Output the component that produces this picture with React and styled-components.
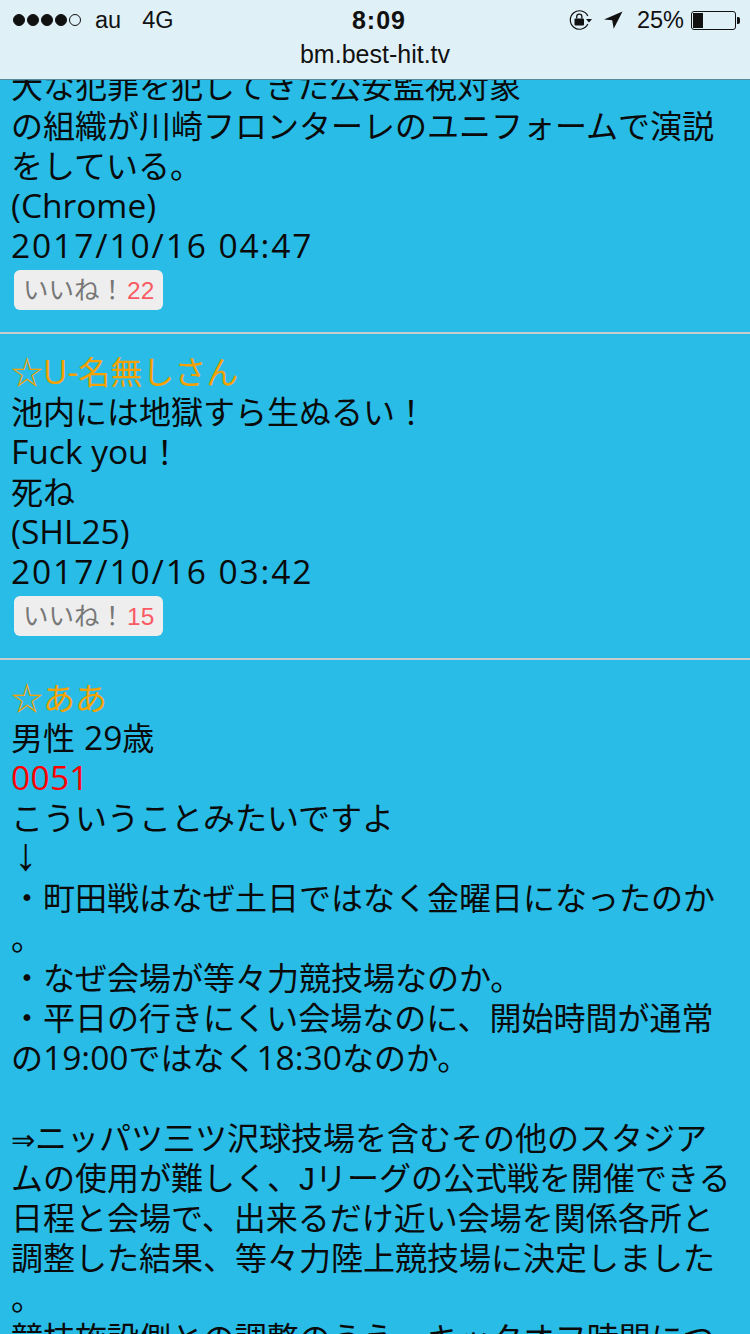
import React from "react";
import styled, { createGlobalStyle } from "styled-components";

const Global = createGlobalStyle`
  html, body { margin: 0; padding: 0; background: #28bce6; }
`;
const Page = styled.div`
  width: 750px; height: 1334px; overflow: hidden; background: #28bce6;
  font-family: "Liberation Sans", "Noto Sans CJK JP", sans-serif; color: #111;
`;
const Header = styled.header`
  position: relative; z-index: 2; height: 79px; background: #dff0f7; border-bottom: 1px solid #5b8a9c;
  display: flex; flex-direction: column;
`;
const StatusBar = styled.div`
  height: 40px; display: grid; grid-template-columns: 1fr auto 1fr; align-items: center; padding: 0 11px 0 13px;
  font-size: 23.5px; color: #111;
`;
const Left = styled.div`display: flex; align-items: center; gap: 14px;`;
const Dots = styled.div`display: flex; gap: 2px;`;
const Dot = styled.span`
  width: 12px; height: 12px; border-radius: 50%; box-sizing: border-box; border: 1px solid #111;
  background: ${p => (p.$on ? "#111" : "transparent")};
`;
const Network = styled.span`margin-left: 7px;`;
const Clock = styled.div`font-weight: 700; font-size: 25px; letter-spacing: 1px; margin-left: 6px;`;
const Right = styled.div`display: flex; align-items: center; justify-content: flex-end;`;
const Url = styled.div`text-align: center; font-size: 25px; line-height: 28px; color: #111;`;
const Feed = styled.main`
  margin-top: -13px; font-family: Inter, "Noto Sans CJK JP", sans-serif; font-size: 32px; line-height: 40px;
  white-space: nowrap; color: #0a0a0a;
`;
const Post = styled.article`
  padding: 0 0 22px 11px; border-bottom: 2px solid #c8ccce; margin-bottom: 19px;
  &:last-child { border: 0; }
`;
const Line = styled.div`height: 40px;`;
const Name = styled(Line)`color: #f5a100;`;
const Red = styled(Line)`color: #f00;`;
const Latin = styled.span`
  font-family: "Open Sans", sans-serif; font-size: 33.5px; font-weight: 400; line-height: 0;
  letter-spacing: ${p => p.$s || 0}px;
`;
const JLetter = styled.span`font-family: "Liberation Sans", sans-serif; line-height: 0;`;
const Star = styled.span`font-family: "Liberation Sans", "Noto Sans CJK JP", sans-serif; line-height: 0;`;
const DownArrow = styled.span`
  font-family: "Liberation Sans", sans-serif; font-size: 46px; line-height: 0; margin-left: 3px;
`;
const SmallArrow = styled.span`font-family: "Liberation Sans", sans-serif; font-size: 29px; line-height: 0;`;
const Like = styled.button`
  display: block; margin: 3px 0 0 3px; height: 40px; padding: 0 9px; border: 0; border-radius: 6px;
  background: #eee; color: #777; font-family: "Liberation Sans", "Noto Sans CJK JP", sans-serif; font-size: 25.5px; line-height: 40px;
`;
const Count = styled.span`color: #fa5a64; font-size: 24.5px; margin-left: 2px;`;

const BatteryBox = styled.div`
  width: 45px; height: 19px; border: 1px solid #111; border-radius: 3px; padding: 1px; box-sizing: border-box; display: flex;
  position: relative; margin-left: 7px; margin-right: 3px;
  &::after { content: ""; position: absolute; right: -5px; top: 5px; width: 3px; height: 7px; background: #111; border-radius: 0 2px 2px 0; }
`;
const BatteryFill = styled.div`width: 10px; background: #111;`;
const LockIcon = styled.svg`margin-right: 12px;`;
const ArrowIcon = styled.svg`margin-right: 14px;`;

const RotationLock = () => (
  <LockIcon width="23" height="20" viewBox="0 0 23 20" fill="none">
    <path d="M18.8 6A9.2 9.2 0 1 0 18.8 14" stroke="#111" strokeWidth="1.2" />
    <path d="M17 9h6l-3 3.5z" fill="#111" />
    <rect x="5.5" y="8.5" width="9.5" height="7" rx="1" fill="#111" />
    <path d="M7.7 8.5V6.8a2.6 2.6 0 0 1 5.2 0v1.7" stroke="#111" strokeWidth="1.3" />
  </LockIcon>
);
const Arrow = () => (
  <ArrowIcon width="19" height="18" viewBox="0 0 19 18"><path d="M18.5.5 0 8.5l8.2.8 1.5 8.5z" fill="#111" /></ArrowIcon>
);

const P = ({ children }) => <Line>{children}</Line>;

export default function App() {
  return (
    <Page>
      <Global />
      <Header>
        <StatusBar>
          <Left>
            <Dots>{[1, 1, 1, 1, 0].map((o, i) => <Dot key={i} $on={!!o} />)}</Dots>
            <span>au</span>
            <Network>4G</Network>
          </Left>
          <Clock>8:09</Clock>
          <Right>
            <RotationLock />
            <Arrow />
            <span>25%</span>
            <BatteryBox><BatteryFill /></BatteryBox>
          </Right>
        </StatusBar>
        <Url>bm.best-hit.tv</Url>
      </Header>
      <Feed>
        <Post>
          <P>大な犯罪を犯してきた公安監視対象</P>
          <P>の組織が川崎フロンターレのユニフォームで演説</P>
          <P>をしている。</P>
          <P><Latin>(Chrome)</Latin></P>
          <P><Latin $s={1.9}>2017/10/16 04:47</Latin></P>
          <Like>いいね！<Count>22</Count></Like>
        </Post>
        <Post>
          <Name><Star>☆</Star><Latin>U-</Latin>名無しさん</Name>
          <P>池内には地獄すら生ぬるい！</P>
          <P><Latin>Fuck you</Latin>！</P>
          <P>死ね</P>
          <P><Latin>(SHL25)</Latin></P>
          <P><Latin $s={1.9}>2017/10/16 03:42</Latin></P>
          <Like>いいね！<Count>15</Count></Like>
        </Post>
        <Post>
          <Name><Star>☆</Star>ああ</Name>
          <P>男性 <Latin>29</Latin>歳</P>
          <Red><Latin $s={0.3}>0051</Latin></Red>
          <P>こういうことみたいですよ</P>
          <P><DownArrow>↓</DownArrow></P>
          <P>・町田戦はなぜ土日ではなく金曜日になったのか</P>
          <P>。</P>
          <P>・なぜ会場が等々力競技場なのか。</P>
          <P>・平日の行きにくい会場なのに、開始時間が通常</P>
          <P>の<Latin>19:00</Latin>ではなく<Latin>18:30</Latin>なのか。</P>
          <P />
          <P><SmallArrow>⇒</SmallArrow>ニッパツ三ツ沢球技場を含むその他のスタジア</P>
          <P>ムの使用が難しく、<JLetter>J</JLetter>リーグの公式戦を開催できる</P>
          <P>日程と会場で、出来るだけ近い会場を関係各所と</P>
          <P>調整した結果、等々力陸上競技場に決定しました</P>
          <P>。</P>
          <P>競技施設側との調整のうえ、キックオフ時間につ</P>
        </Post>
      </Feed>
    </Page>
  );
}
